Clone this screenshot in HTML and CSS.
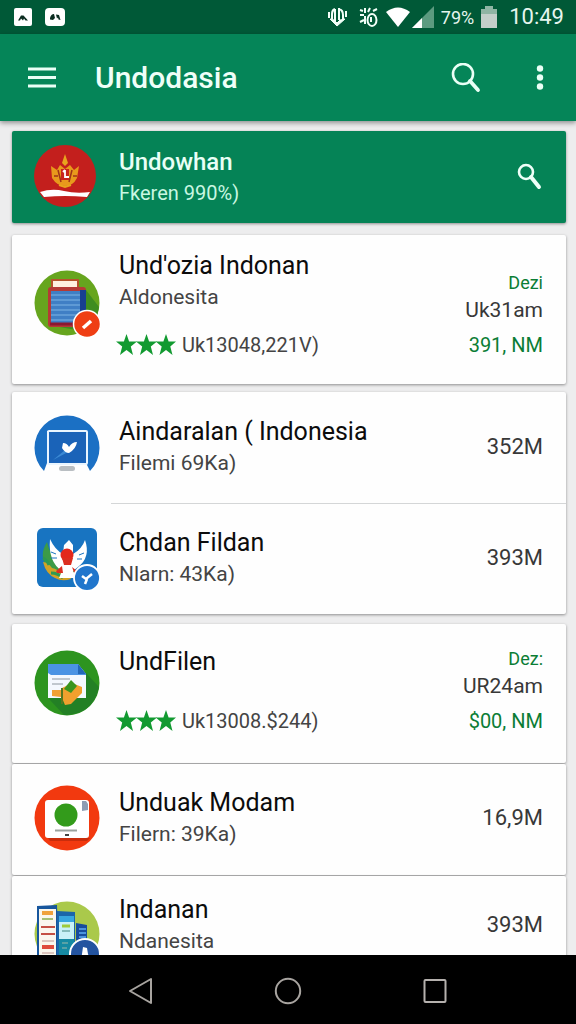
FILE: index.html
```html
<!DOCTYPE html>
<html lang="id">
<head>
<meta charset="utf-8">
<meta name="viewport" content="width=device-width, initial-scale=1">
<title>Undodasia</title>
<link rel="stylesheet" href="styles.css">
</head>
<body>
<svg class="sprite" aria-hidden="true">
  <symbol id="stars" viewBox="0 0 60 24">
    <path d="M10.500 1l2.600 7.400 7.900.2-6.200 4.900 2.200 8.500-6.500-4.900L4 22l2.200-8.500L0 8.600l7.900-.2z"/>
    <path d="M30.500 1l2.600 7.400 7.900.2-6.200 4.900 2.200 8.500-6.500-4.900L24 22l2.200-8.500L20 8.600l7.900-.2z"/>
    <path d="M50 1l2.600 7.400 7.400.2-5.700 4.900 2.200 8.500-6.500-4.900L43.500 22l2.200-8.500-6-4.900 7.700-.2z"/>
  </symbol>
</svg>
<div class="screen">
  <div class="status">
    <div class="status-group">
      <svg width="18" height="20" viewBox="0 0 18 20"><rect y="1" width="18" height="18" rx="2" fill="#fff"/><path d="M4 13.500l3-5 2.500 0 4.500 5-2.500 0-1.500-2-1 2-2-2-1 2z" fill="#0b2d20"/></svg>
      <svg width="20" height="20" viewBox="0 0 20 20"><rect y="1" width="20" height="18" rx="4" fill="#fff"/><path d="M5 11q1-4 4-4l1 4-2 2-3-.5zM11 7.500l3 .5 1.500 5-2-.5-.5-2-1 1z" fill="#0b2d20"/></svg>
    </div>
    <div class="status-group status-right">
      <svg width="20" height="22" viewBox="0 0 20 22" fill="none" stroke="#f2fff8" stroke-width="2"><path d="M7 3v13M11 2v12M7 3q-3 1-3 5v5M11 3q4 1 4 6v5M1 6v6M18 5v6"/><path d="M2 13l7 7 8-7-5 1-3 3-3-3z" fill="#f2fff8" stroke-width="1"/></svg>
      <svg width="20" height="22" viewBox="0 0 20 22" fill="none" stroke="#f2fff8" stroke-width="2"><ellipse cx="13" cy="14" rx="4.500" ry="6"/><path d="M12 11v5M1 4l3 1M1 9h4M1 16l4-2M6 2v5M11 2l-2 4M14 5l4-2M6 10v8"/></svg>
      <svg width="24" height="20" viewBox="0 0 24 20"><path d="M0 5Q12-4 24 5L12 20z" fill="#fff"/></svg>
      <svg width="22" height="22" viewBox="0 0 22 22"><path d="M22 0v22H0z" fill="#5c9b80"/><path d="M10 12v10H0z" fill="#fff"/></svg>
      <span class="battery-text">79%</span>
      <svg width="16" height="22" viewBox="0 0 16 22"><path d="M4 0h8v3h4v19H0V3h4z" fill="#8fb5a4"/><path d="M0 8h16v14H0z" fill="#c3cfca"/></svg>
      <time class="clock">10:49</time>
    </div>
  </div>
  <header class="appbar">
    <button class="icon-button" aria-label="Menu"><svg width="28" height="22" viewBox="0 0 28 22"><path d="M0 2h28M0 10.500h28M0 19h28" stroke="#eafff6" stroke-width="3"/></svg></button>
    <h1 class="appbar-title">Undodasia</h1>
    <button class="icon-button" aria-label="Search"><svg width="30" height="30" viewBox="0 0 30 30" fill="none" stroke="#eafff6"><circle cx="12" cy="11" r="10" stroke-width="2.600"/><path d="M19 18l8 9" stroke-width="3.800" stroke-linecap="round"/></svg></button>
    <button class="icon-button more" aria-label="More options"><svg width="8" height="26" viewBox="0 0 8 26" fill="#eafff6"><circle cx="4" cy="3.500" r="3.200"/><circle cx="4" cy="12.500" r="3.200"/><circle cx="4" cy="21.500" r="3.200"/></svg></button>
  </header>
  <main class="list">
    <section class="card hero row">
      <svg class="app-icon" viewBox="0 0 66 66"><circle cx="31" cy="32" r="31" fill="#c31f1d"/><path d="M31 10l3 9-3 3-3-3z" fill="#e8a41d"/><path d="M17 22l6 4 3-5 5 4 5-4 4 5 5-4-2 12q-4 8-12 8T18 34z" fill="#e8991c"/><path d="M24 26l3 12M38 26l-3 12M20 32h4M39 32h4" stroke="#9e3218" stroke-width="1.500"/><path d="M27 25h8v11h-8z" fill="#c8261d"/><path d="M31 26v7h4M29 28l2-2" stroke="#fff" stroke-width="1.800" fill="none"/><path d="M25 41l6 2 6-2" stroke="#e8a41d" stroke-width="2" fill="none"/><path d="M6 48q12-4 24-1t26 1l-3 5q-12-1-22-1t-21 1z" fill="#fff"/></svg>
      <div class="text"><h2 class="title">Undowhan</h2><p class="sub">Fkeren 990%)</p></div>
      <button class="icon-button" aria-label="Search list"><svg width="26" height="28" viewBox="0 0 26 28" fill="none" stroke="#effff8"><circle cx="9" cy="9" r="7" stroke-width="2.600"/><path d="M14 14l8 10" stroke-width="4" stroke-linecap="round"/></svg></button>
    </section>

    <section class="card row rated">
      <svg class="app-icon" viewBox="0 0 66 66"><circle cx="33" cy="33" r="32.500" fill="#66a51e"/><path d="M14 52l6 4 33 6q10-10 12-25L52 20z" fill="#3f8d20"/><rect x="18" y="10" width="26" height="8" fill="#fff0df" stroke="#b4532b" stroke-width="2"/><rect x="14" y="17" width="38" height="40" rx="3" fill="#b53a36"/><path d="M46 20h6v30l-6 4z" fill="#173f91"/><rect x="17" y="21" width="29" height="32" fill="#3f7fc5"/><path d="M17 25h29M17 30h29M17 35h29M17 40h29M17 45h29M17 50h29" stroke="#6aa4da" stroke-width="1.500"/><path d="M16 54h28" stroke="#8c1830" stroke-width="3"/><circle cx="53" cy="54" r="13.500" fill="#ef3e14" stroke="#fff" stroke-width="1.500"/><path d="M49 58l8-7" stroke="#fff" stroke-width="3.500"/></svg>
      <div class="text"><h2 class="title">Und'ozia Indonan</h2><p class="sub">Aldonesita</p>
        <p class="rating"><svg class="stars" role="img" aria-label="3 stars"><use href="#stars"/></svg>Uk13048,221V)</p></div>
      <div class="side"><span class="tag">Dezi</span><span>Uk31am</span><span class="price">391, NM</span></div>
    </section>

    <section class="card">
      <article class="row">
        <svg class="app-icon" viewBox="0 0 66 66"><path d="M10 57A32.500 32.500 0 1 1 56 57L52 49V17H13v32z" fill="#1b70c4"/><rect x="14" y="17" width="39" height="33" rx="1" fill="#1a63b8" stroke="#e9f5ff" stroke-width="2"/><path d="M19 46l12-10 3 2z" fill="#3b8ad4"/><path d="M28 34l1-5q4 0 6 4 3-5 8-5-1 7-8 11-4 0-7-5z" fill="#fff"/><rect x="25" y="52" width="16" height="5" rx="2.500" fill="#b9bec2"/></svg>
        <div class="text"><h2 class="title">Aindaralan ( Indonesia</h2><p class="sub">Filemi 69Ka)</p></div>
        <span class="value">352M</span>
      </article>
      <article class="row divided">
        <svg class="app-icon" viewBox="0 0 66 66"><rect x="3" y="3" width="60" height="59" rx="6" fill="#1874c1"/><path d="M13 17q-9 14 1 26l22 11 6-8-18-8q-8-8-11-21z" fill="#3c9b48"/><path d="M9 37q5 0 9 6 6 1 9 6 7-1 10 5-9 3-16-1-9-4-12-16z" fill="#d2a326"/><path d="M9 33q4 2 6 7M17 48q7 0 12 5" stroke="#2e9953" stroke-width="3" fill="none"/><path d="M16 14q5 11 13 15l1-9 5-5 4 5v9q9-5 12-14 6 17-7 27l-5 4 4 7H25l3-7q-14-9-12-32z" fill="#fff"/><path d="M17 27l5 2M17 33l6 0M50 28l-5 2M48 34l-5 0" stroke="#1874c1" stroke-width="1"/><circle cx="33" cy="30" r="6.500" fill="#e3281c"/><path d="M28 33h11l-2 7h-7zM22 46l6-5 1 7h-6zM38 42l5 4-2 4z" fill="#dc2e20"/><circle cx="53" cy="53" r="13" fill="#2176cc" stroke="#fff" stroke-width="1.800"/><path d="M48 51l4 3 6-5M53 54l-2 5" fill="none" stroke="#fff" stroke-width="2.500"/></svg>
        <div class="text"><h2 class="title">Chdan Fildan</h2><p class="sub">Nlarn: 43Ka)</p></div>
        <span class="value">393M</span>
      </article>
    </section>

    <section class="card stack">
      <article class="row rated compact">
        <svg class="app-icon" viewBox="0 0 66 66"><circle cx="33" cy="33" r="32.500" fill="#2d941f"/><path d="M15 49l15 16q29 0 35-28L52 23z" fill="#238025"/><path d="M14 14h30l8 10v24H14z" fill="#f4f8ff"/><path d="M14 14h30l8 10v1H17l-3-2z" fill="#4b93e4"/><path d="M44 14v10h8z" fill="#2468b8"/><path d="M18 29h18M18 34h11" stroke="#aeb7c0" stroke-width="1.500"/><path d="M18 40h9v7l-9-1z" fill="#f2a035"/><path d="M28 38l10-5 10 4v6L37 54l-6 1-3-7z" fill="#f0a02e"/><path d="M37 30l6 6-6 7-7-4z" fill="#39951f"/><path d="M28 38v16" stroke="#57761f" stroke-width="2"/></svg>
        <div class="text"><h2 class="title">UndFilen</h2>
          <p class="rating"><svg class="stars" role="img" aria-label="3 stars"><use href="#stars"/></svg>Uk13008.$244)</p></div>
        <div class="side"><span class="tag">Dez:</span><span>UR24am</span><span class="price">$00, NM</span></div>
      </article>
    </section>

    <section class="card stack">
      <article class="row raised">
        <svg class="app-icon" viewBox="0 0 66 66"><circle cx="33" cy="33" r="32.500" fill="#f2390f"/><path d="M14 53h42l-3 3H16z" fill="#c92d0c"/><rect x="11" y="15" width="44" height="38" rx="3" fill="#fff"/><path d="M48 16h4l2 3v6l-6 1z" fill="#8d9cb3"/><circle cx="32" cy="30" r="11.500" fill="#339b1b"/><path d="M21 45.500h22" stroke="#9ba39e" stroke-width="2"/><path d="M31 50h4" stroke="#444" stroke-width="2"/></svg>
        <div class="text"><h2 class="title">Unduak Modam</h2><p class="sub">Filern: 39Ka)</p></div>
        <span class="value">16,9M</span>
      </article>
    </section>

    <section class="card">
      <article class="row last">
        <svg class="app-icon low" viewBox="0 0 66 66"><circle cx="33" cy="33" r="32.500" fill="#aac94b"/><path d="M3 5l20-1 2 62H3z" fill="#17569d"/><path d="M5 8h17v58H5z" fill="#faf7ed"/><path d="M23 10l18 1v55H23z" fill="#1a66aa"/><path d="M25 15h15v23H25z" fill="#c9f1f7"/><path d="M25 15h15v6H25z" fill="#36a6df"/><path d="M25 38h15v28H25z" fill="#168aa2"/><path d="M42 22l11 2v30H42z" fill="#174c9c"/><path d="M45 28h7M45 32h7M45 36h7" stroke="#4b93dc" stroke-width="2"/><path d="M8 12h11" stroke="#efa23c" stroke-width="4"/><path d="M8 18h11" stroke="#a5bf75" stroke-width="2"/><path d="M7 26h14M7 33h14" stroke="#c45043" stroke-width="2"/><path d="M8 40h12M8 52h12M8 57h12" stroke="#d4b7b0" stroke-width="1.500"/><path d="M8 46h12" stroke="#df4c3d" stroke-width="4"/><path d="M28 25h8" stroke="#9dcb3a" stroke-width="3"/><path d="M28 30h8M28 42h6M28 47h5" stroke="#70aaa8" stroke-width="1.500"/><circle cx="51" cy="53" r="15" fill="#2454a0" stroke="#fff" stroke-width="2"/><path d="M49 46l4 1 1 6 2 5-4-3-5 5z" fill="#fff"/></svg>
        <div class="text"><h2 class="title">Indanan</h2><p class="sub">Ndanesita</p></div>
        <span class="value">393M</span>
      </article>
    </section>
  </main>
  <nav class="navbar" aria-label="System">
    <button class="icon-button" aria-label="Back"><svg width="28" height="30" viewBox="0 0 28 30"><path d="M24 3v24L3 15z" fill="none" stroke="#a8a4a0" stroke-width="2" stroke-linejoin="round"/></svg></button>
    <button class="icon-button" aria-label="Home"><svg width="28" height="28" viewBox="0 0 28 28"><circle cx="14" cy="14" r="12.200" fill="none" stroke="#a8a4a0" stroke-width="2"/></svg></button>
    <button class="icon-button" aria-label="Recent apps"><svg width="28" height="28" viewBox="0 0 28 28"><rect x="3.500" y="3" width="21" height="22" rx="1" fill="none" stroke="#b5b1ae" stroke-width="2"/></svg></button>
  </nav>
</div>
</body>
</html>
```
FILE: styles.css
```css
* { box-sizing: border-box; }
body { margin: 0; font-family: Roboto, "Liberation Sans", sans-serif; color: #0c0c0c; }
h1, h2, p { margin: 0; font-weight: 400; }
svg { display: block; flex: none; }
.sprite { position: absolute; width: 0; height: 0; }
.screen { display: flex; flex-direction: column; height: 100vh; background: #ededee; }

.status { display: flex; flex: none; align-items: center; justify-content: space-between; height: 34px; padding: 0 12px 0 14px; background: #005937; color: #e6f6ee; }
.status-group { display: flex; align-items: center; gap: 13px; }
.status-right { gap: 7px; }
.status-right svg:nth-child(2) { margin-left: 4px; }
.status-right svg:nth-child(4) { margin-left: -5px; }
.battery-text { font-size: 18px; }
.clock { margin-left: 5px; font-size: 22px; line-height: 34px; }

.appbar { display: flex; flex: none; align-items: center; height: 87px; padding: 0 32px 0 28px; background: #058558; box-shadow: 0 2px 5px rgba(0, 0, 0, .4); z-index: 1; }
.appbar-title { flex: 1; margin-left: 39px; color: #effff8; font-size: 30px; font-weight: 500; line-height: 40px; }
.icon-button { display: flex; align-items: center; justify-content: center; padding: 0; border: 0; background: none; }
.more { margin-left: 55px; }

.list { flex: 1; min-height: 0; padding: 10px 10px 0 12px; overflow: hidden; }
.card { margin-bottom: 8px; border-radius: 2px; background: #fefefe; box-shadow: 0 1px 3px rgba(0, 0, 0, .4); }
.card.stack { margin-bottom: 1px; }
.card:has(+ .stack) { margin-bottom: 10px; }
.card.stack:has(+ .stack) { margin-bottom: 1px; }
.row { display: flex; align-items: center; min-height: 111px; padding: 0 23px 2px 22px; }
.row.divided { position: relative; }
.row.divided::before { content: ""; position: absolute; top: 0; right: 0; left: 99px; height: 1px; background: #d4d6d7; }
.row.raised { padding-bottom: 4px; }
.row.last { min-height: 98px; padding-bottom: 0; }
.app-icon { width: 66px; height: 66px; overflow: visible; }
.app-icon.low { margin-top: 18px; }
.text { flex: 1; min-width: 0; margin-left: 19px; white-space: nowrap; }
.title { font-size: 25px; line-height: 32px; }
.sub { color: #444; font-size: 21px; line-height: 30px; }
.value { color: #383838; font-size: 22px; line-height: 30px; }

.hero { min-height: 92px; margin-bottom: 12px; padding-bottom: 0; background: #058356; color: #e9fff6; }
.hero .title { font-size: 24px; font-weight: 500; }
.hero .sub { color: #c9f7e2; font-size: 20px; }

.row.rated { align-items: flex-end; padding-top: 15px; padding-bottom: 24px; }
.row.rated .app-icon { align-self: flex-start; margin-top: 20px; }
.row.compact { padding-top: 22px; padding-bottom: 27px; }
.row.compact .app-icon { margin-top: 4px; }
.rating { display: flex; align-items: center; gap: 6px; margin: 18px 0 0 -3px; color: #444; font-size: 20px; line-height: 30px; }
.compact .rating { margin-top: 28px; }
.stars { width: 60px; height: 24px; fill: #129a31; }
.side { display: flex; flex-direction: column; align-items: flex-end; color: #383838; font-size: 21px; line-height: 28px; white-space: nowrap; }
.tag { color: #0b7d35; font-size: 18px; line-height: 26px; }
.price { margin-top: 6px; color: #0b7d35; font-size: 20px; line-height: 30px; }

.navbar { display: flex; flex: none; align-items: center; justify-content: center; gap: 119px; height: 69px; padding-top: 3px; background: #000; z-index: 1; }
```
